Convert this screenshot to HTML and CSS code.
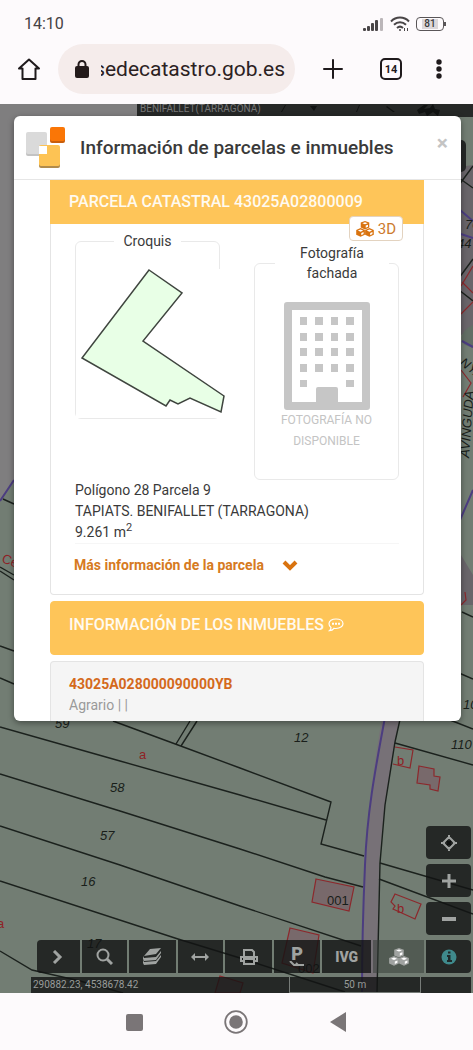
FILE: index.html
```html
<!DOCTYPE html>
<html lang="es">
<head>
  <meta charset="UTF-8" />
  <meta name="viewport" content="width=device-width, initial-scale=1" />
  <title>Sede Electrónica del Catastro</title>
  <link rel="stylesheet" href="styles.css">
</head>
<body>
  <!-- Shared icons -->
  <svg class="sprite" aria-hidden="true">
    <symbol id="cubes" viewBox="0 0 20 18">
      <g fill="currentColor">
        <path d="M10 0l4.800 1.800v5.600L10 9.500 5.200 7.400V1.800z" />
        <path d="M5 8l4.900 2v5.400L5 17.800.1 15.400V10z" />
        <path d="M15 8l4.900 2v5.400L15 17.800l-4.900-2.400V10z" />
      </g>
      <g class="cube-cut">
        <path d="M7 2.500L10 3.600l3-1.100-3-1.100zM10.800 5.200v2.500l2.600-1.200V4.200z" />
        <path d="M2 10.700L5 12l3-1.300-3-1.200zM5.800 13.500V16l2.600-1.300v-2.300z" />
        <path d="M12 10.700l3 1.300 3-1.300-3-1.200zM15.800 13.500V16l2.600-1.300v-2.300z" />
      </g>
    </symbol>
  </svg>

  <!-- Phone status bar -->
  <div class="status-bar">
    <span class="clock">14:10</span>
    <div class="status-icons">
      <svg width="22" height="14" viewBox="0 0 22 14">
        <g fill="#494547">
          <rect x="1" y="11" width="3" height="3" rx="1" />
          <rect x="5" y="9" width="3" height="5" rx="1" />
          <rect x="9" y="6" width="3" height="8" rx="1" />
          <rect x="13" y="3" width="3" height="11" rx="1" />
        </g>
        <rect x="18" y="1" width="3" height="13" rx="1" fill="#bbb6b9" />
      </svg>
      <svg width="20" height="16" viewBox="0 0 20 16" fill="none" stroke="#494547" stroke-width="2">
        <path d="M1 5.500C6 .3 14 .3 19 5.500M4 8.800c3.500-3.400 8.500-3.400 12 0M7 12c2-1.800 4-1.800 6 0" />
        <circle cx="10" cy="14" r="1" fill="#494547" stroke="none" />
        <path d="M14.500 12v3M17.500 12v3" stroke-width="1" />
      </svg>
      <div class="battery"><span>81</span></div>
    </div>
  </div>

  <!-- Browser bar -->
  <header class="browser-bar">
    <button class="bar-btn" aria-label="Inicio">
      <svg width="24" height="24" viewBox="0 0 24 24" fill="none" stroke="#1f1a1c" stroke-width="2" stroke-linejoin="round">
        <path d="M12 2.500L2 11.500h3.500V22h13V11.500H22z" />
      </svg>
    </button>
    <div class="url-box">
      <svg width="14" height="18" viewBox="0 0 14 18">
        <path d="M3.500 7V4.500a3.500 3.500 0 0 1 7 0V7" fill="none" stroke="#231a1a" stroke-width="2" />
        <rect x="0" y="6" width="14" height="12" rx="2" fill="#231a1a" />
      </svg>
      <label class="url-field">
        <input type="text" value="sedecatastro.gob.es" aria-label="Dirección" />
      </label>
    </div>
    <button class="bar-btn" aria-label="Nueva pestaña">
      <svg width="20" height="20" viewBox="0 0 20 20" stroke="#1f1a1c" stroke-width="2" stroke-linecap="round">
        <path d="M10 1v18M1 10h18" />
      </svg>
    </button>
    <button class="bar-btn tabs-btn">14</button>
    <button class="bar-btn menu-btn" aria-label="Menú">
      <svg width="6" height="20" viewBox="0 0 6 20" fill="#1f1a1c">
        <circle cx="3" cy="3" r="2.700" /><circle cx="3" cy="10" r="2.700" /><circle cx="3" cy="17" r="2.700" />
      </svg>
    </button>
  </header>

  <main class="viewport">
    <!-- Cadastral map -->
    <svg class="map" viewBox="0 104 473 889" preserveAspectRatio="xMinYMin slice">
      <rect x="0" y="104" width="473" height="889" fill="#727d73" />
      <path d="M0 104h137v200L14 481 0 500z" fill="#7f7e7f" />
      <path d="M440 170l33-5v165l-12 5v220l12 20v30h-33z" fill="#69656a" />
      <path d="M473 325c-12 5-14 15-8 20l8 3z" fill="#626e65" />
      <rect x="137" y="104" width="336" height="13" fill="#262827" />
      <text x="140" y="112" class="place">BENIFALLET(TARRAGONA)</text>
      <g fill="#111312">
        <path d="M281 112l4-7h1l-4 7zM310 106h7l-3 5zM356 112l3-7h1l-3 7zM387 106l8 6h-2l-7-5z" />
        <path d="M417 110l7-5h4l-4 4 6-1 3-4 2 5 5 1-2 6-5-4-6 4-2-4-6 2z" />
      </g>
      <rect x="440" y="140" width="26" height="32" rx="5" fill="#252827" />

      <!-- road -->
      <path d="M385 700C374 765 367 810 365 870L361 993H377L379 865C383 815 390 765 403 700z" fill="#777177" />
      <path d="M386 712C374 775 367 815 365 865C363 910 362 950 362 993" class="limit" />
      <path d="M401 715L395 742 385 805 380 863 377 993" class="line" />

      <!-- parcels -->
      <g class="line">
        <path d="M113 721L178 745 240 768 331 802 321 844 364 856" />
        <path d="M0 727L120 761 240 795 326 820" />
        <path d="M0 774L120 811 240 849 325 877 363 887" />
        <path d="M0 826L120 865 240 906 361 946" />
        <path d="M0 881L178 939 240 958 345 992" />
        <path d="M0 951L32 970 80 981 123 993" />
        <path d="M190 721L176 744M197 721L181 746" />
        <path d="M395 743L473 765M380 863L473 890M379 879L473 914M450 720L473 729" />
        <path d="M3 499L14 504M0 567L14 575M0 571L14 580M0 646L14 651M0 678L14 684" />
        <path d="M459 185L473 166M459 178L473 188M459 278L473 259M459 290L473 301" />
        <path d="M459 673L473 679M462 612L473 617" />
      </g>
      <path d="M0 501L14 480M460 210L473 221M473 238L461 234M473 347L462 341M460 520L473 490" class="limit" />

      <!-- buildings -->
      <g class="building">
        <path d="M395 747L413 750 410 768 393 764" fill="none" />
        <path d="M419 766L434 769 434 776 440 777 438 791 430 789 430 785 417 783z" />
        <path d="M316 879L354 887 349 911 312 902z" />
        <path d="M395 894L421 904 415 919 393 909 395 906 391 902z" fill="none" />
        <path d="M290 928L319 935 313 973 282 963z" />
        <path d="M220 976L243 983 240 993 215 993z" />
        <path d="M461 286L473 266M461 314L473 302M462 282L473 293M461 370L471 383 463 397M461 605L466 600 465 592" fill="none" />
      </g>

      <g class="map-label">
        <text x="55" y="728">59</text>
        <text x="110" y="792">58</text>
        <text x="100" y="840">57</text>
        <text x="81" y="886">16</text>
        <text x="87" y="948">17</text>
        <text x="294" y="742">12</text>
        <text x="451" y="749">110</text>
        <text x="463" y="709">10</text>
        <text x="327" y="905" class="upright">001</text>
        <text x="298" y="973" class="upright">002</text>
        <text x="465" y="229">70</text>
        <text x="457" y="248">44</text>
        <text transform="translate(459 364) rotate(38)">NYA</text>
        <text transform="translate(469 458) rotate(-86)">AVINGUDA</text>
      </g>
      <g class="map-label red">
        <text x="139" y="759">a</text>
        <text x="-3" y="928">a</text>
        <text x="397" y="765">b</text>
        <text x="397" y="913">b</text>
        <text transform="translate(1 562) rotate(20)">Ce</text>
      </g>
    </svg>

    <section class="modal">
      <div class="modal-header">
        <svg class="logo" width="40" height="42" viewBox="0 0 40 42">
          <rect x="1" y="7" width="21" height="22" rx="2" fill="#c3c3c3" />
          <rect x="1" y="5" width="21" height="22" rx="2" fill="#dadada" />
          <rect x="25" y="2" width="15" height="14" rx="2" fill="#c95e0b" />
          <rect x="25" y="0" width="15" height="14" rx="2" fill="#fa7606" />
          <rect x="14" y="20" width="21" height="21" rx="2" fill="#b18b4b" />
          <rect x="14" y="18" width="21" height="21" rx="2" fill="#fdc354" />
          <rect x="14" y="19" width="8" height="8" fill="#fff" />
        </svg>
        <h1>Información de parcelas e inmuebles</h1>
        <button class="close" aria-label="Cerrar">×</button>
      </div>

      <div class="modal-body">
        <div class="card parcel">
          <h2>PARCELA CATASTRAL 43025A02800009</h2>
          <button class="btn-3d">
            <svg width="18" height="16"><use href="#cubes" /></svg>
            3D
          </button>
          <div class="figures">
            <fieldset>
              <legend>Croquis</legend>
              <svg class="sketch" width="150" height="149" viewBox="76 269 150 149">
                <path d="M149 270L182 293 143 341 224 396 221 412 190 398 178 404 170 400 166 406 82 358z" fill="#e8ffe6" stroke="#3f453f" stroke-width="1.500" />
              </svg>
            </fieldset>
            <fieldset class="facade">
              <legend>Fotografía fachada</legend>
              <svg width="86" height="108" viewBox="0 0 86 108" fill="#c6c6c6">
                <path fill-rule="evenodd" d="M3 0h80a3 3 0 0 1 3 3v102a3 3 0 0 1-3 3H3a3 3 0 0 1-3-3V3a3 3 0 0 1 3-3zM8 8v92h24V87a2 2 0 0 1 2-2h18a2 2 0 0 1 2 2v13h24V8z" />
                <path id="windows" d="M16 15h7v8h-7zM31 15h8v8h-8zM47 15h7v8h-7zM62 15h8v8h-8z" />
                <use href="#windows" y="16" />
                <use href="#windows" y="31" />
                <use href="#windows" y="47" />
                <path d="M16 78h7v7h-7zM62 78h8v7h-8z" />
              </svg>
              <p>FOTOGRAFÍA NO DISPONIBLE</p>
            </fieldset>
          </div>
          <div class="parcel-data">
            <p>Polígono 28 Parcela 9</p>
            <p>TAPIATS. BENIFALLET (TARRAGONA)</p>
            <p>9.261 m<sup>2</sup></p>
          </div>
          <a class="more" href="#">
            Más información de la parcela
            <svg width="16" height="12" viewBox="0 0 16 12" fill="none" stroke="#d9730f" stroke-width="4">
              <path d="M2 2l6 6 6-6" />
            </svg>
          </a>
        </div>

        <div class="card banner">
          <h2>INFORMACIÓN DE LOS INMUEBLES</h2>
          <svg width="16" height="14" viewBox="0 0 16 14" fill="none" stroke="#fff" stroke-width="1.200">
            <path d="M8 1c4 0 7 2 7 4.700S12 10.500 8 10.500c-.8 0-1.400 0-2-.2C4.800 12 3 12.700 1.500 12.700 2.500 12 3 11 3 9.500 1.700 8.500 1 7.300 1 5.800 1 3 4 1 8 1z" />
            <path d="M4 5.800h2M7 5.800h2M10 5.800h2" stroke-width="2" />
          </svg>
        </div>

        <div class="card property">
          <a href="#">43025A028000090000YB</a>
          <p>Agrario | |</p>
        </div>
      </div>
    </section>

    <!-- Map controls -->
    <div class="zoom-controls">
      <button aria-label="Localizar">
        <svg width="16" height="16" viewBox="0 0 16 16" fill="none" stroke="currentColor" stroke-width="2">
          <path d="M8 2l6 6-6 6-6-6zM8 0v4M8 12v4M0 8h4M12 8h4" /><path d="M6 6l4 4M10 6l-4 4" stroke="#0d0f0e" />
        </svg>
      </button>
      <button aria-label="Acercar">
        <svg width="14" height="14" viewBox="0 0 14 14" stroke="currentColor" stroke-width="3"><path d="M7 0v14M0 7h14" /></svg>
      </button>
      <button aria-label="Alejar">
        <svg width="14" height="14" viewBox="0 0 14 14" stroke="currentColor" stroke-width="4"><path d="M0 7h14" /></svg>
      </button>
    </div>

    <nav class="toolbar">
      <button aria-label="Mostrar">
        <svg width="12" height="14" viewBox="0 0 12 14" fill="none" stroke="currentColor" stroke-width="3"><path d="M2 1l6 6-6 6" /></svg>
      </button>
      <button aria-label="Buscar">
        <svg width="18" height="18" viewBox="0 0 18 18" fill="none" stroke="currentColor" stroke-width="2"><circle cx="8" cy="7" r="5.500" /><path d="M12 11l5 5" stroke-width="3" /></svg>
      </button>
      <button aria-label="Capas">
        <svg width="20" height="18" viewBox="0 0 20 18" fill="currentColor">
          <path d="M8 1l11-1-5 6-12 2z" />
          <path d="M1 8l1 2 12-1 5-6v2l-5 7-12 1-1-2zM1 12l1 2 12-1 5-6v2l-5 7-12 1-1-2z" />
        </svg>
      </button>
      <button aria-label="Medir">
        <svg width="18" height="10" viewBox="0 0 18 10"><path d="M0 5l4-4v3h10V1l4 4-4 4V6H4v3z" fill="currentColor" /></svg>
      </button>
      <button aria-label="Imprimir">
        <svg width="18" height="16" viewBox="0 0 18 16" fill="none" stroke="currentColor" stroke-width="2"><path d="M4 8V1h8l2 2v5M4 12H1V8h16v4h-3M4 10h10v5H4z" /></svg>
      </button>
      <button aria-label="Ponencias" class="ponencias">
        P
        <svg width="16" height="6" viewBox="0 0 16 6" fill="none" stroke="currentColor" stroke-width="2"><path d="M1 0l4 4h4l-2-2M9 4h6" /></svg>
      </button>
      <button class="ivg">IVG</button>
      <button class="active" aria-label="Vista 3D">
        <svg width="22" height="18"><use href="#cubes" /></svg>
      </button>
      <button class="info" aria-label="Información">
        <svg width="16" height="16" viewBox="0 0 16 16"><circle cx="8" cy="8" r="7.500" fill="currentColor" /><path d="M7 2.500h2.500v2H7zM6 6h3.500v5H11v2H6v-2h1V8H6z" fill="#1f2a2a" /></svg>
      </button>
    </nav>

    <div class="scale-bar">
      <span class="coords">290882.23, 4538678.42</span>
      <span class="scale">50 m</span>
    </div>
  </main>

  <!-- Android navigation -->
  <footer class="nav-bar">
    <button aria-label="Recientes">
      <svg width="18" height="18" viewBox="0 0 18 18"><rect x="1" y="1" width="17" height="17" rx="2" fill="#7a7577" /></svg>
    </button>
    <button aria-label="Inicio">
      <svg width="24" height="24" viewBox="0 0 24 24"><circle cx="12" cy="12" r="10.800" fill="none" stroke="#7a7577" stroke-width="1.800" /><circle cx="12" cy="12" r="6.800" fill="#7a7577" /></svg>
    </button>
    <button aria-label="Atrás">
      <svg width="18" height="20" viewBox="0 0 18 20"><path d="M1 10L17 0v20z" fill="#7a7577" /></svg>
    </button>
  </footer>
</body>
</html>
```
FILE: styles.css
```css
/* Reset */
* {
  box-sizing: border-box;
  margin: 0;
  padding: 0;
}

body {
  display: flex;
  flex-direction: column;
  min-height: 100vh;
  font-family: Roboto, "Liberation Sans", sans-serif;
  font-size: 14px;
  line-height: 21px;
  color: #3a3a3a;
  background: #fdfafc;
}

button {
  display: flex;
  align-items: center;
  justify-content: center;
  border: none;
  background: none;
  font-family: inherit;
  cursor: pointer;
}

svg {
  flex-shrink: 0;
}

a {
  text-decoration: none;
}

.sprite {
  display: none;
}

/* Status bar */
.status-bar {
  display: flex;
  align-items: center;
  justify-content: space-between;
  height: 44px;
  padding: 3px 29px 0 24px;
}

.clock {
  font-size: 16px;
  color: #454143;
}

.status-icons {
  display: flex;
  align-items: center;
  gap: 6px;
}

.battery {
  position: relative;
  width: 28px;
  height: 14px;
  padding: 1px 5px;
  border: 1px solid #5a5658;
  border-radius: 4px;
  text-align: center;
}

.battery span {
  display: block;
  background: #dcd7da;
  font-size: 10px;
  font-weight: 500;
  line-height: 10px;
}

.battery::after {
  content: "";
  position: absolute;
  right: -3px;
  top: 4px;
  width: 2px;
  height: 4px;
  background: #5a5658;
}

/* Browser bar */
.browser-bar {
  display: flex;
  align-items: center;
  height: 60px;
  padding: 0 31px 10px 17px;
}

.url-box {
  flex: 1;
  display: flex;
  align-items: center;
  gap: 12px;
  min-width: 0;
  height: 50px;
  margin: 0 28px 0 17px;
  padding: 0 10px 0 17px;
  border-radius: 25px;
  background: #f5eceb;
}

.url-field {
  flex: 1;
  display: flex;
  justify-content: flex-end;
  min-width: 0;
  overflow: hidden;
}

.url-field input {
  flex-shrink: 0;
  width: 240px;
  border: none;
  outline: none;
  background: none;
  font-family: inherit;
  font-size: 21px;
  text-align: right;
  color: #2b2122;
}

.tabs-btn {
  width: 22px;
  height: 22px;
  margin: 0 34px 0 37px;
  border: 2px solid #1f1a1c;
  border-radius: 5px;
  font-size: 11px;
  font-weight: 700;
  color: #1f1a1c;
}

/* Page */
.viewport {
  position: relative;
  flex: 1;
  display: flex;
  flex-direction: column;
  overflow: hidden;
}

.map {
  position: absolute;
  inset: 0;
  width: 100%;
  height: 100%;
}

.place {
  font-size: 10px;
  fill: #777;
}

.line {
  fill: none;
  stroke: #1b211d;
  stroke-width: 1.4;
}

.limit {
  fill: none;
  stroke: #4c3d80;
  stroke-width: 2;
}

.building {
  fill: #78696b;
  stroke: #8c282c;
  stroke-width: 1.2;
}

.map-label {
  font-family: "Liberation Sans", Arial, sans-serif;
  font-size: 13px;
  font-style: italic;
  fill: #191e1a;
}

.map-label .upright {
  font-style: normal;
}

.map-label.red {
  font-style: normal;
  fill: #8f2226;
}

/* Modal */
.modal {
  position: relative;
  margin: 12px 12px 0 14px;
  border-radius: 6px;
  background: #fff;
  box-shadow: 0 2px 6px rgba(0, 0, 0, 0.4);
  overflow: hidden;
}

.modal-header {
  display: flex;
  align-items: center;
  height: 64px;
  padding: 0 13px 0 11px;
  border-bottom: 1px solid #e6e6e6;
}

.modal-header h1 {
  flex: 1;
  margin-left: 15px;
  font-size: 19px;
  font-weight: 500;
}

.close {
  align-self: flex-start;
  margin-top: 16px;
  font-size: 21px;
  font-weight: 700;
  line-height: 22px;
  color: #c4c4c4;
}

.modal-body {
  display: flex;
  flex-direction: column;
  gap: 6px;
  padding: 0 37px 0 36px;
}

.card {
  border: 1px solid #e4e4e4;
  border-radius: 4px;
}

.card h2 {
  font-size: 16px;
  font-weight: 500;
  color: #fffaf0;
}

/* Parcel card */
.parcel {
  position: relative;
  border-top: none;
  border-radius: 0 0 4px 4px;
}

.parcel h2 {
  margin: 0 -1px;
  padding: 11px 19px 12px;
  background: #fec559;
}

.btn-3d {
  position: absolute;
  top: 36px;
  right: 20px;
  gap: 4px;
  height: 25px;
  padding: 0 6px;
  border: 1px solid #e3d3c0;
  border-radius: 4px;
  background: #fff;
  font-size: 15px;
  color: #cc7a2c;
}

.btn-3d svg {
  color: #d9730f;
}

.cube-cut {
  fill: #fff;
}

.figures {
  display: flex;
  align-items: flex-start;
  justify-content: space-between;
  padding: 7px 24px 0;
}

fieldset {
  width: 145px;
  min-width: 0;
  border: 1px solid #e9e9e9;
  border-radius: 6px;
}

legend {
  margin: 0 auto;
  padding: 0 9px;
  line-height: 20px;
  text-align: center;
}

.sketch {
  display: block;
  margin-top: 18px;
  background: #fff;
}

.facade {
  display: flex;
  flex-direction: column;
  align-items: center;
  margin-top: 12px;
  padding: 19px 20px 27px;
}

.facade legend {
  width: 114px;
}

.facade p {
  font-size: 12px;
  text-align: center;
  color: #c4c4c4;
}

.parcel-data {
  margin: 0 24px;
  border-bottom: 1px solid #f6f6f6;
}

.parcel-data sup {
  font-size: 11px;
  line-height: 0;
}

.more {
  display: flex;
  align-items: center;
  gap: 18px;
  padding: 11px 23px 18px;
  font-weight: 700;
  color: #d67a22;
}

/* Properties */
.banner {
  display: flex;
  align-items: center;
  gap: 4px;
  padding: 12px 18px 19px;
  border-color: #fec559;
  background: #fec559;
}

.property {
  padding: 12px 18px 5px;
  border-bottom: none;
  border-radius: 4px 4px 0 0;
  background: #f5f5f5;
}

.property a {
  font-weight: 700;
  color: #d4691c;
}

.property p {
  color: #9a9a9a;
}

/* Map controls */
.zoom-controls {
  position: relative;
  display: flex;
  flex-direction: column;
  align-self: flex-end;
  gap: 5px;
  margin: auto 2px 5px;
}

.zoom-controls button,
.toolbar button {
  height: 33px;
  background: rgba(17, 19, 19, 0.8);
  color: #a0a3a1;
}

.zoom-controls button {
  width: 45px;
  border-radius: 4px;
}

.toolbar {
  position: relative;
  display: grid;
  grid-template-columns: 43fr 46fr 47fr 46fr 47fr 47fr 49fr 52fr 45fr;
  gap: 2px;
  margin: 0 2px 4px 37px;
}

.toolbar button:first-child {
  border-radius: 4px 0 0 4px;
}

.toolbar .ponencias {
  flex-direction: column;
  font-size: 18px;
  font-weight: 900;
  line-height: 14px;
}

.toolbar .ivg {
  font-size: 14px;
  font-weight: 900;
}

.toolbar .active {
  background: rgba(50, 58, 52, 0.5);
}

.toolbar .active .cube-cut {
  fill: #535c55;
}

.toolbar .info {
  border-radius: 0 4px 4px 0;
  color: #3f8a8c;
}

.scale-bar {
  position: relative;
  display: grid;
  grid-template-columns: 258fr 132fr 50fr;
  height: 16px;
  margin: 0 2px 0 31px;
  background: rgba(17, 19, 19, 0.8);
  font-size: 10px;
  line-height: 16px;
  color: #999c9a;
}

.coords {
  padding-left: 2px;
}

.scale {
  border: 1px solid #777c78;
  border-top: none;
  line-height: 15px;
  text-align: center;
}

/* Bottom navigation */
.nav-bar {
  display: flex;
  align-items: center;
  justify-content: center;
  gap: 81px;
  height: 57px;
  padding-right: 2px;
}
```
